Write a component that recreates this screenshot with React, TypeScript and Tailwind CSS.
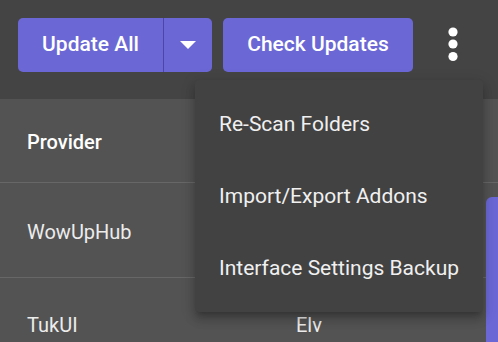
import React from "react";

export default function App() {
  return (
    <div
      className="relative w-[498px] h-[342px] overflow-hidden bg-[#444444] text-white"
      style={{ fontFamily: "Roboto, 'Liberation Sans', sans-serif" }}
    >
      {/* Top bar */}
      <div className="h-[99px] flex items-start pt-[18px] pl-[18px]">
        <div className="flex h-[54px] rounded-[5px] bg-[#6b68d6] overflow-hidden">
          <button className="w-[145px] h-full flex items-center justify-center text-[21px] font-medium text-white whitespace-nowrap">
            Update All
          </button>
          <div className="w-px h-full bg-[#4a47a8]" />
          <button className="w-[48px] h-full flex items-center justify-center">
            <svg width="16" height="8" viewBox="0 0 16 8">
              <path d="M0 0 L16 0 L8 8 Z" fill="white" />
            </svg>
          </button>
        </div>
        <button className="ml-[11px] w-[190px] h-[54px] rounded-[5px] bg-[#6b68d6] flex items-center justify-center text-[21px] font-medium text-white whitespace-nowrap">
          Check Updates
        </button>
        <button className="ml-[16px] w-[48px] h-[54px] flex items-center justify-center">
          <svg width="12" height="36" viewBox="0 0 12 36">
            <circle cx="6" cy="5" r="4.6" fill="white" />
            <circle cx="6" cy="17" r="4.6" fill="white" />
            <circle cx="6" cy="29.5" r="4.6" fill="white" />
          </svg>
        </button>
      </div>

      {/* Table */}
      <div className="bg-[#535353] h-[243px]">
        <div className="h-[84px] pt-[3px] flex items-center border-b border-[#676767]">
          <div className="pl-[27px] w-[296px] text-[20px] font-medium text-white">Provider</div>
        </div>
        <div className="h-[95px] pt-[3px] flex items-center border-b border-[#676767]">
          <div className="pl-[27px] w-[296px] text-[20px] text-[#ececec]">WowUpHub</div>
        </div>
        <div className="h-[90px] pt-[3px] flex items-center">
          <div className="pl-[27px] w-[296px] text-[20px] text-[#ececec]">TukUI</div>
          <div className="text-[20px] text-[#ececec]">Elv</div>
        </div>
      </div>

      {/* Right purple element */}
      <div className="absolute left-[486px] top-[197px] w-[20px] h-[160px] rounded-tl-[6px] bg-[#6b68d6]" />

      {/* Menu overlay */}
      <div className="absolute left-[195px] top-[80px] w-[288px] py-[8px] rounded-[4px] bg-[#424242] shadow-[0_5px_5px_-3px_rgba(0,0,0,0.2),0_8px_10px_1px_rgba(0,0,0,0.14),0_3px_14px_2px_rgba(0,0,0,0.12)]">
        <div className="h-[72px] pt-[2px] flex items-center px-[24px] text-[21px] text-[#f0f0f0] whitespace-nowrap">Re-Scan Folders</div>
        <div className="h-[72px] pt-[2px] flex items-center px-[24px] text-[21px] text-[#f0f0f0] whitespace-nowrap">Import/Export Addons</div>
        <div className="h-[72px] pt-[2px] flex items-center px-[24px] text-[21px] text-[#f0f0f0] whitespace-nowrap">Interface Settings Backup</div>
      </div>
    </div>
  );
}
